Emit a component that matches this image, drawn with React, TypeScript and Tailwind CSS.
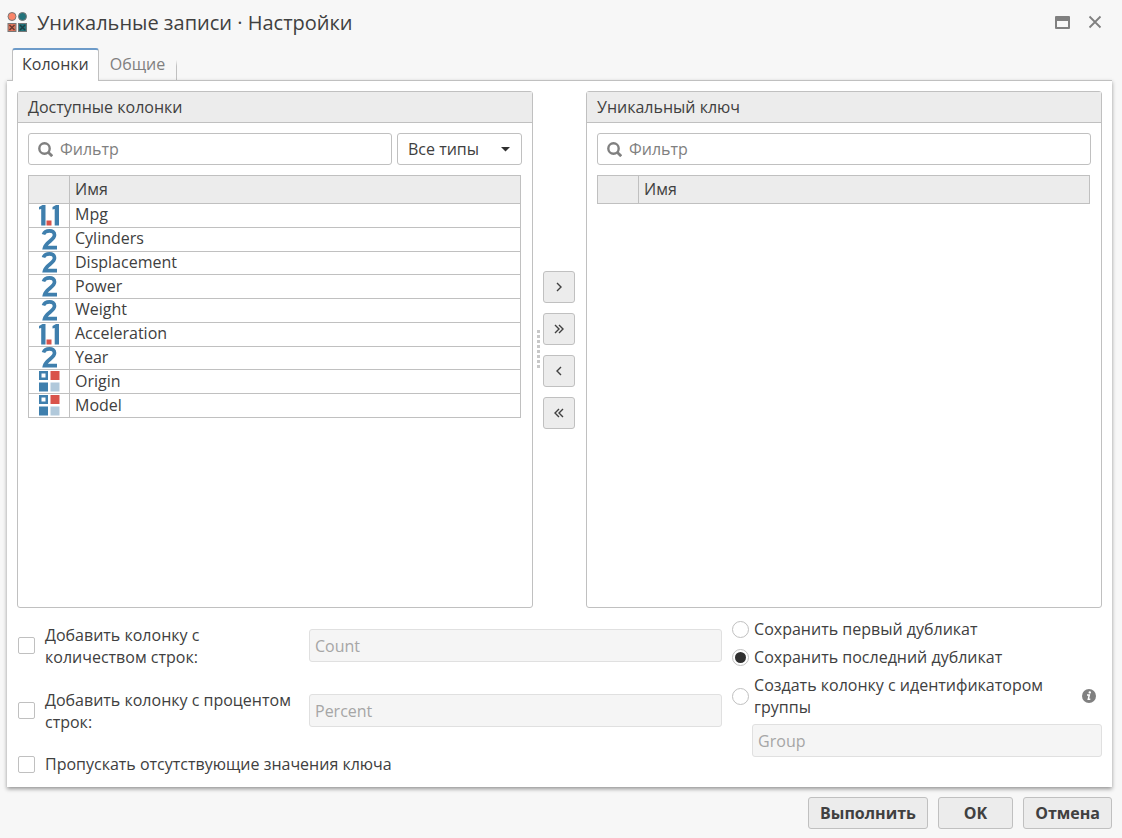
import { useState } from "react";
import type { ReactNode } from "react";

type ColumnType = "real" | "integer" | "string";

interface Column {
  name: string;
  type: ColumnType;
}

const availableColumns: Column[] = [
  { name: "Mpg", type: "real" },
  { name: "Cylinders", type: "integer" },
  { name: "Displacement", type: "integer" },
  { name: "Power", type: "integer" },
  { name: "Weight", type: "integer" },
  { name: "Acceleration", type: "real" },
  { name: "Year", type: "integer" },
  { name: "Origin", type: "string" },
  { name: "Model", type: "string" },
];

const duplicateModes = [
  { id: "first", label: "Сохранить первый дубликат" },
  { id: "last", label: "Сохранить последний дубликат" },
  { id: "group", label: "Создать колонку с идентификатором группы" },
];

const moveButtons = [
  { label: "Добавить", path: "M14 12l4 4-4 4" },
  { label: "Добавить все", path: "M12 12l4 4-4 4M16 12l4 4-4 4" },
  { label: "Убрать", path: "M18 12l-4 4 4 4" },
  { label: "Убрать все", path: "M16 12l-4 4 4 4M20 12l-4 4 4 4" },
];

export default function App() {
  const [mode, setMode] = useState("last");

  return (
    <div className="flex min-h-screen flex-col bg-[#f7f7f7] font-['Open_Sans','Noto_Sans',sans-serif] text-base leading-[22px] text-[#404040]">
      {/* Title bar */}
      <header className="flex h-12 items-center pr-5 pb-1 pl-[7px]">
        <NodeIcon />
        <h1 className="ml-2.5 flex-1 pt-0.5 text-xl">
          Уникальные записи · Настройки
        </h1>
        <button type="button" aria-label="Развернуть" className="mr-[18px]">
          <svg width="15" height="13" viewBox="0 0 15 13">
            <rect width="15" height="13" rx="1" fill="#808080" />
            <rect x="2" y="5" width="11" height="6" fill="#f7f7f7" />
          </svg>
        </button>
        <button type="button" aria-label="Закрыть">
          <svg
            width="14"
            height="14"
            viewBox="0 0 14 14"
            fill="none"
            stroke="#808080"
            strokeWidth="1.8"
          >
            <path d="M1.500 1.500l11 11M12.500 1.500l-11 11" />
          </svg>
        </button>
      </header>

      {/* Tabs */}
      <div role="tablist" className="flex h-8 pl-3">
        <button
          type="button"
          role="tab"
          aria-selected="true"
          className="relative -mb-px rounded-t-[3px] border-x border-t-2 border-x-[#c0c0c0] border-t-[#6d9bc9] bg-white px-[9px] pb-1"
        >
          Колонки
        </button>
        <button
          type="button"
          role="tab"
          aria-selected="false"
          className="px-[11px] text-[#808080]"
        >
          Общие
        </button>
        <span className="mt-3 w-px bg-linear-to-b from-transparent to-[#c0c0c0] to-30%" />
      </div>

      <main className="mr-2.5 ml-[7px] flex flex-1 flex-col border-t border-[#c0c0c0] bg-white p-2.5 pb-3 shadow-[0_2px_4px_rgba(0,0,0,0.4)]">
        <div className="flex flex-1">
          <Panel title="Доступные колонки">
            <div className="flex gap-[5px]">
              <FilterInput />
              <div className="relative w-[125px]">
                <select
                  aria-label="Тип"
                  className="h-8 w-full appearance-none rounded-[3px] border border-[#c0c0c0] bg-white px-2.5"
                >
                  <option>Все типы</option>
                </select>
                <svg
                  className="pointer-events-none absolute top-3.5 right-3"
                  width="9"
                  height="5"
                  viewBox="0 0 9 5"
                >
                  <path d="M0 0h9L4.500 4.500z" fill="#303030" />
                </svg>
              </div>
            </div>
            <ColumnTable columns={availableColumns} />
          </Panel>

          <div className="flex w-[53px] items-center gap-[3px] pl-1">
            <div className="h-[39px] w-[3px] bg-[repeating-linear-gradient(#c8c8c8_0_3px,transparent_3px_5px)]" />
            <div className="flex flex-col gap-2.5">
              {moveButtons.map((button) => (
                <button
                  key={button.label}
                  type="button"
                  aria-label={button.label}
                  className="flex size-8 items-center justify-center rounded-[3px] border border-[#c0c0c0] bg-[#ececec]"
                >
                  <svg
                    className="shrink-0"
                    width="32"
                    height="32"
                    viewBox="0 0 32 32"
                    fill="none"
                    stroke="#404040"
                    strokeWidth="1.4"
                  >
                    <path d={button.path} />
                  </svg>
                </button>
              ))}
            </div>
          </div>

          <Panel title="Уникальный ключ">
            <div className="flex">
              <FilterInput />
            </div>
            <ColumnTable columns={[]} />
          </Panel>
        </div>

        {/* Options */}
        <div className="mt-2.5 grid grid-cols-[61fr_32fr] gap-2.5">
          <div className="mt-[5px] flex flex-col gap-5">
            <ExtraColumn
              id="count"
              label="Добавить колонку с количеством строк:"
              value="Count"
            />
            <ExtraColumn
              id="percent"
              label="Добавить колонку с процентом строк:"
              value="Percent"
            />
            <div className="flex items-center">
              <Checkbox id="skip" />
              <label htmlFor="skip">Пропускать отсутствующие значения ключа</label>
            </div>
          </div>

          <div className="flex flex-col gap-1.5">
            {duplicateModes.map((item) => (
              <div key={item.id} className="flex items-center">
                <input
                  id={item.id}
                  type="radio"
                  name="mode"
                  checked={mode === item.id}
                  onChange={() => setMode(item.id)}
                  className="mr-[5px] grid size-[17px] shrink-0 appearance-none place-content-center rounded-full border border-[#c0c0c0] bg-white before:size-[11px] before:rounded-full checked:before:bg-[#303030]"
                />
                <label htmlFor={item.id} className="flex-1">
                  {item.label}
                </label>
                {item.id === "group" && <InfoIcon />}
              </div>
            ))}
            <DisabledInput
              label="Имя колонки группы"
              value="Group"
              className="ml-5"
            />
          </div>
        </div>
      </main>

      <footer className="flex justify-end gap-2.5 pt-2.5 pr-2.5 pb-[9px]">
        <DialogButton>Выполнить</DialogButton>
        <DialogButton>
          <span className="px-3.5">OK</span>
        </DialogButton>
        <DialogButton>Отмена</DialogButton>
      </footer>
    </div>
  );
}

const Panel = ({ title, children }: { title: string; children: ReactNode }) => (
  <section className="flex min-w-0 flex-1 flex-col rounded-[3px] border border-[#c0c0c0]">
    <h2 className="h-[31px] border-b border-[#c0c0c0] bg-[#ececec] px-2.5 leading-[30px]">
      {title}
    </h2>
    <div className="flex flex-col gap-2.5 p-2.5">{children}</div>
  </section>
);

const FilterInput = () => (
  <label className="flex h-8 min-w-0 flex-1 items-center gap-[7px] rounded-[3px] border border-[#c0c0c0] bg-white px-[9px]">
    <svg
      className="shrink-0"
      width="15"
      height="15"
      viewBox="0 0 15 15"
      fill="none"
      stroke="#808080"
    >
      <circle cx="6.500" cy="6.500" r="5.200" strokeWidth="2.400" />
      <path d="M10.200 10.200l4 4" strokeWidth="2.800" />
    </svg>
    <input
      type="text"
      aria-label="Фильтр"
      placeholder="Фильтр"
      className="w-full min-w-0 outline-none placeholder:text-[#808080]"
    />
  </label>
);

const ColumnTable = ({ columns }: { columns: Column[] }) => (
  <div className="pr-px">
    <table
      className={`w-full table-fixed border-collapse leading-5 ${
        columns.length > 0 ? "h-[243px]" : ""
      }`}
    >
      <thead>
        <tr className="h-7 bg-[#ececec]">
          <th className="w-[41px] border border-[#c0c0c0] p-0" aria-label="Тип" />
          <th className="border border-[#c0c0c0] px-[5px] pt-0 pb-0.5 text-left font-normal">
            Имя
          </th>
        </tr>
      </thead>
      <tbody>
        {columns.map((column) => (
          <tr key={column.name}>
            <td className="border border-[#c0c0c0] p-0">
              <TypeIcon type={column.type} />
            </td>
            <td className="border border-[#c0c0c0] px-[5px] pt-0 pb-0.5">
              {column.name}
            </td>
          </tr>
        ))}
      </tbody>
    </table>
  </div>
);

const Checkbox = ({ id }: { id: string }) => (
  <input
    id={id}
    type="checkbox"
    className="mr-2.5 ml-px size-[17px] shrink-0 appearance-none rounded-[2px] border border-[#c0c0c0] bg-white checked:bg-[#404040]"
  />
);

const DisabledInput = ({
  label,
  value,
  className = "flex-1",
}: {
  label: string;
  value: string;
  className?: string;
}) => (
  <input
    type="text"
    disabled
    aria-label={label}
    defaultValue={value}
    className={`h-[33px] min-w-0 rounded-[3px] border border-[#e0e0e0] bg-[#f5f5f5] px-[5px] text-[#a6a6a6] ${className}`}
  />
);

const ExtraColumn = ({
  id,
  label,
  value,
}: {
  id: string;
  label: string;
  value: string;
}) => (
  <div className="flex h-[45px] items-center">
    <Checkbox id={id} />
    <label htmlFor={id} className="w-[264px] pr-2.5">
      {label}
    </label>
    <DisabledInput label={label} value={value} />
  </div>
);

const DialogButton = ({ children }: { children: ReactNode }) => (
  <button
    type="button"
    className="h-8 rounded-[3px] border border-[#c0c0c0] bg-[#ececec] px-[11px] font-bold"
  >
    {children}
  </button>
);

const TypeIcon = ({ type }: { type: ColumnType }) => (
  <svg className="mx-auto" width="21" height="21" viewBox="0 0 21 21">
    {type === "real" && (
      <>
        <path
          d="M0 2L3.500 0H6.500V20.500H2.200V4L0 4.500zM13.500 2L17 0H20V20.500H15.700V4L13.500 4.500z"
          fill="#3f7fad"
        />
        <rect x="7.500" y="15.500" width="5" height="5" fill="#d9534a" />
      </>
    )}
    {type === "integer" && (
      <path
        d="M4.500 5.500C6 0.800 15.500 0.300 15.500 6C15.500 11 7 13 5.600 18.700H18"
        fill="none"
        stroke="#3f7fad"
        strokeWidth="3.700"
      />
    )}
    {type === "string" && (
      <>
        <rect x="1.250" y="1.250" width="6.500" height="6.500" fill="#fff" stroke="#3f7fad" strokeWidth="2.500" />
        <rect x="11.500" width="9" height="9" fill="#d9534a" />
        <rect y="11.500" width="9" height="9" fill="#3f7fad" />
        <rect x="11.500" y="11.500" width="9" height="9" fill="#b1c9db" />
      </>
    )}
  </svg>
);

const NodeIcon = () => (
  <svg width="20" height="20" viewBox="0 0 20 20" stroke="#777">
    <circle cx="5" cy="4.500" r="4" fill="#fa8468" />
    <circle cx="15.500" cy="4.500" r="4" fill="#22737b" />
    <rect x="1" y="11.500" width="8" height="8" fill="#e0765c" />
    <rect x="11.500" y="11.500" width="8" height="8" fill="#22737b" />
    <path
      d="M2.500 13l5 5M7.500 13l-5 5"
      stroke="#6b3b30"
      strokeWidth="1.500"
    />
    <path d="M13 13l5 5M18 13l-5 5" stroke="#1c3f44" strokeWidth="1.500" />
  </svg>
);

const InfoIcon = () => (
  <svg className="mr-1.5 shrink-0" width="14" height="14" viewBox="0 0 14 14">
    <circle cx="7" cy="7" r="7" fill="#808080" />
    <circle cx="7.800" cy="3.400" r="1.200" fill="#fff" />
    <path
      d="M5 6h2.300L6.300 10.200h2"
      fill="none"
      stroke="#fff"
      strokeWidth="1.500"
    />
  </svg>
);
